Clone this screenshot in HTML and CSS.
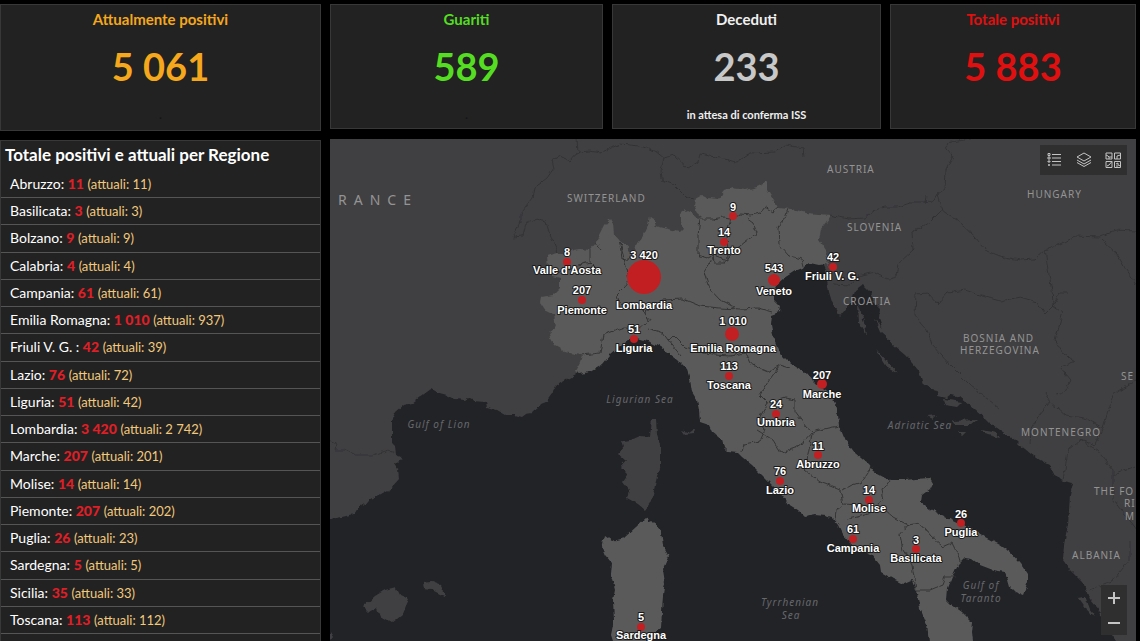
FILE: index.html
```html
<!DOCTYPE html>
<html lang="it">
<head>
<meta charset="utf-8">
<meta name="viewport" content="width=device-width, initial-scale=1">
<title>Situazione per Regione</title>
<link rel="stylesheet" href="styles.css">
</head>
<body>
<main class="dashboard">
  <section class="card card-active card-tall">
    <h2 class="card-title">Attualmente positivi</h2>
    <p class="card-value">5 061</p>
    <p class="card-note card-note-dim">.</p>
  </section>
  <section class="card card-healed">
    <h2 class="card-title">Guariti</h2>
    <p class="card-value">589</p>
    <p class="card-note card-note-dim">.</p>
  </section>
  <section class="card card-deaths">
    <h2 class="card-title">Deceduti</h2>
    <p class="card-value">233</p>
    <p class="card-note">in attesa di conferma ISS</p>
  </section>
  <section class="card card-total">
    <h2 class="card-title">Totale positivi</h2>
    <p class="card-value">5 883</p>
  </section>

  <section class="regions">
    <h2 class="regions-title">Totale positivi e attuali per Regione</h2>
    <ul class="region-list">
      <li>Abruzzo: <b>11</b> <span>(attuali: 11)</span></li>
      <li>Basilicata: <b>3</b> <span>(attuali: 3)</span></li>
      <li>Bolzano: <b>9</b> <span>(attuali: 9)</span></li>
      <li>Calabria: <b>4</b> <span>(attuali: 4)</span></li>
      <li>Campania: <b>61</b> <span>(attuali: 61)</span></li>
      <li>Emilia Romagna: <b>1 010</b> <span>(attuali: 937)</span></li>
      <li>Friuli V. G. : <b>42</b> <span>(attuali: 39)</span></li>
      <li>Lazio: <b>76</b> <span>(attuali: 72)</span></li>
      <li>Liguria: <b>51</b> <span>(attuali: 42)</span></li>
      <li>Lombardia: <b>3 420</b> <span>(attuali: 2 742)</span></li>
      <li>Marche: <b>207</b> <span>(attuali: 201)</span></li>
      <li>Molise: <b>14</b> <span>(attuali: 14)</span></li>
      <li>Piemonte: <b>207</b> <span>(attuali: 202)</span></li>
      <li>Puglia: <b>26</b> <span>(attuali: 23)</span></li>
      <li>Sardegna: <b>5</b> <span>(attuali: 5)</span></li>
      <li>Sicilia: <b>35</b> <span>(attuali: 33)</span></li>
      <li>Toscana: <b>113</b> <span>(attuali: 112)</span></li>
    </ul>
  </section>

  <section class="map">
    <svg class="map-canvas" viewBox="330 139 806 502" preserveAspectRatio="xMidYMid slice" role="img" aria-label="Mappa dei casi per regione">
      <defs>
        <filter id="rough" filterUnits="userSpaceOnUse" x="320" y="130" width="830" height="520">
          <feTurbulence type="fractalNoise" baseFrequency="0.16" numOctaves="2" seed="4"/>
          <feDisplacementMap in="SourceGraphic" scale="5" xChannelSelector="R" yChannelSelector="G"/>
        </filter>
      </defs>
      <g filter="url(#rough)">
        <path class="land" d="M320 130H1150V650H1122L1112 635 1105 625 1100 612 1090 600 1083 583 1070 570 1063 560 1064 545 1068 525 1069 510 1070 495 1073 483 1060 480 1055 475 1050 465 1040 460 1030 453 1020 445 1015 440 1003 432 990 423 985 418 975 409 960 397 952 395 945 393 932 390 923 384 919 371 905 355 893 345 884 332 879 318 880 308 874 302 870 293 862 285 855 290 852 300 845 310 840 316 836 310 832 302 829 292 827 280 826 270 822 262 800 230 700 300 640 330 600 350 576 374 560 383 556 386 552 394 546 402 541 404 539 407 532 413 526 414 522 417 515 415 506 415 497 410 487 407 486 402 474 401 468 398 465 400 455 399 447 395 436 392 431 389 420 397 412 403 404 405 396 412 392 420 392 443 395 446 396 455 401 457 402 460 395 463 398 468 399 479 390 489 372 499 360 506 354 514 342 517 320 521Z"/>
        <path class="land" d="M652 419L656 419 657 435 660 445 660 465 655 485 653 495 650 503 645 510 638 504 627 498 629 490 623 482 628 475 620 467 626 460 618 453 624 446 622 441 631 440 640 436 650 437Z"/>
        <path class="land" d="M363 607L375 596 385 590 396 587 400 595 409 599 402 615 392 623 380 616 377 608 369 613ZM423 582L432 581 440 584 444 592 444 596 432 590 424 589ZM682 431L688 433 695 428 694 434 685 435ZM330 632L333 637 330 641Z"/>
        <path class="land" d="M940 390L952 394 947 398 938 396ZM943 399L962 402 957 407 945 405ZM927 416L937 415 933 419ZM952 421L977 420 971 425 955 425ZM981 430L997 433 1000 438 984 434ZM958 432L966 432 962 436ZM875 320L888 333 901 346 893 344 880 332ZM876 349L887 361 899 374 887 367ZM858 304L865 325 867 335 859 323ZM1077 597L1085 596 1090 609 1096 617 1088 612 1081 602Z"/>
        <path class="italy" d="M547 255L558 252 566 255 573 250 580 249 590 250 596 243 600 235 605 225 610 219 613 224 614 234 620 241 625 245 634 256 637 243 644 235 648 226 650 216 653 218 656 226 664 228 672 230 680 232 684 228 681 222 681 213 685 210 691 213 698 219 703 217 697 212 694 206 695 199 702 195 708 198 718 199 724 191 732 188 745 190 757 187 767 182 767 189 774 200 778 208 792 209 806 213 820 214 830 215 829 218 821 229 819 240 826 250 827 260 830 268 826 264 819 265 810 263 805 267 795 271 784 278 776 285 774 292 774 300 781 307 780 312 772 315 771 325 774 340 779 352 787 360 795 366 805 372 815 383 826 390 832 395 835 405 838 415 839 425 845 440 855 453 868 464 874 472 885 478 890 480 905 480 915 479 930 478 933 483 930 489 922 495 921 502 930 509 945 517 960 524 970 527 985 537 1000 545 1010 552 1020 563 1028 575 1028 582 1023 595 1015 592 1010 587 1008 580 1005 572 993 570 980 565 972 559 965 558 958 565 952 578 948 588 947 600 952 605 962 612 972 622 971 632 973 650H930L927 625 920 608 916 590 912 580 903 584 893 579 881 572 880 565 872 555 860 549 850 543 843 535 838 525 832 518 825 516 815 515 805 517 798 510 788 504 780 493 772 485 762 475 752 465 742 457 738 453 728 452 724 448 722 440 712 432 709 425 700 422 699 410 697 400 692 392 690 378 687 369 678 360 670 354 660 347 650 342 640 339 633 337 622 345 610 355 602 365 590 372 580 374 575 371 580 362 582 355 575 354 565 352 555 346 550 338 549 332 556 327 554 315 546 311 540 302 541 297 553 295 560 288 560 278 552 276 548 268Z"/>
        <path class="italy" d="M646 518L656 524 661 532 663 545 669 556 663 570 665 583 663 595 661 628 655 633 648 632 641 650 616 650 611 635 614 620 613 600 615 590 611 575 612 563 605 555 602 548 605 536 612 541 624 538 636 527Z"/>
        <g class="borders">
          <path d="M513 237L523 236 526 224 537 219 546 222 550 235 558 252M513 237L520 222 520 214 532 198 534 188 547 178 554 168 552 160 560 156 570 161 578 152 590 151 600 153 M578 152L577 139M600 153L620 144 640 146 655 151 664 158 661 170 662 180 674 185 685 196 694 199M664 158L674 155 688 168 698 162 700 154 720 158 737 162 750 153 775 152 785 145 803 148 804 156"/>
          <path d="M830 215L848 219 865 218 875 210 885 207 898 207 910 203 924 203 933 201 937 194 945 188 946 170 953 156 947 149 946 143 970 139M926 195L925 204M937 194L942 210 960 222 975 238 985 250 1000 256 1020 260 1035 259 1045 250 1060 244 1075 236 1100 237 1115 230 1136 231M942 210L930 222 912 232 913 250 898 264 896 277 888 279 875 272 858 276 850 285 833 284M1045 250L1048 270 1052 290 1053 305 1060 293 1068 293M1053 305L1063 312 1055 340 1062 352 1075 361 1060 367 1071 380 1065 392 1056 395M1053 305L1045 313 1037 302 1020 297 1000 301 982 296 964 290 948 293 938 304 928 293 916 294 915 315 927 330 932 345 950 365 970 385 1000 409M1102 240L1117 254 1125 268 1136 285"/>
          <path d="M1045 393L1050 402 1040 415 1031 430 1030 444M1050 402L1065 415 1085 418 1103 428 1095 445 1080 440 1068 450 1065 470 1063 480M1103 428L1113 395 1136 380M1080 440L1097 450 1113 470 1113 500 1125 515 1136 530M1113 475L1136 466M1130 540L1130 560 1113 580 1090 590M330 440L337 444 335 450 345 450 355 455 372 455 388 450 395 453"/>
        </g>
        <g class="regions-lines">
          <path d="M550 270L562 274 578 265 590 262 590 250M590 262L601 273M596 243L601 250M634 256L622 260 620 243 627 270 629 281 625 287 617 295 620 304 632 307 645 312 650 321M582 355L600 353 603 335 625 327 640 328 648 322 646 312 662 300 683 299 700 306 720 308 740 309 758 308 772 312"/>
          <path d="M700 219L713 219 724 217 730 218 740 214 752 215 760 213 765 207 773 212 778 208M700 219L698 235 698 255 707 258 713 255 728 260 727 232 731 218M728 258L735 250 745 242 757 233 753 223 746 218M713 255L714 263 724 263 728 258M713 258L704 272 709 288 720 300 734 307M788 209L784 220 778 227 779 245 789 256 802 259 804 267"/>
          <path d="M648 328L663 333 668 340 673 335 685 347 700 351 715 355 730 356 745 353 750 363 763 370 768 372 780 365 790 368M668 340L681 356M780 365L768 382 760 395 768 403 758 420 765 430 760 441 744 444 742 452M768 403L785 398 795 400 795 412 806 427 812 432 828 428 839 426M757 430L773 440 781 453 795 448 805 441 812 433M812 434L808 455 805 470 820 482 840 490 843 504 836 510 835 520M843 490L852 485 862 482 868 473 873 466M843 504L860 505 872 510 884 500 882 490 889 480M882 507L893 517 908 525 900 535 903 550 912 565 916 590M908 525L920 523 930 535 943 547 952 543 958 555 960 562M916 590L930 590 942 585 945 577 956 577M846 520L872 513"/>
        </g>
      </g>

      <g class="country">
        <text class="country-large" x="338" y="205">RANCE</text>
        <text x="567" y="202">SWITZERLAND</text>
        <text x="827" y="173">AUSTRIA</text>
        <text x="1027" y="198">HUNGARY</text>
        <text x="847" y="231">SLOVENIA</text>
        <text x="843" y="305">CROATIA</text>
        <text x="963" y="342">BOSNIA AND</text>
        <text x="960" y="354">HERZEGOVINA</text>
        <text x="1121" y="380">SE</text>
        <text x="1021" y="436">MONTENEGRO</text>
        <text x="1094" y="495">THE FO</text>
        <text x="1124" y="507">RI</text>
        <text x="1125" y="520">M</text>
        <text x="1072" y="559">ALBANIA</text>
      </g>
      <g class="water">
        <text x="439" y="428">Gulf of Lion</text>
        <text x="640" y="403">Ligurian Sea</text>
        <text x="920" y="429">Adriatic Sea</text>
        <text x="790" y="606">Tyrrhenian</text>
        <text x="791" y="619">Sea</text>
        <text x="981" y="589">Gulf of</text>
        <text x="981" y="602">Taranto</text>
      </g>

      <g class="cases">
        <circle cx="733" cy="216" r="4"/><circle cx="724" cy="242" r="4"/><circle cx="567" cy="262" r="4"/><circle cx="582" cy="300" r="4"/>
        <circle cx="644" cy="277" r="17"/><circle cx="774" cy="280" r="6"/><circle cx="833" cy="267" r="4"/><circle cx="634" cy="339" r="4"/>
        <circle cx="732" cy="334" r="7"/><circle cx="729" cy="376" r="4"/><circle cx="822" cy="384" r="5"/><circle cx="776" cy="414" r="4"/>
        <circle cx="818" cy="455" r="4"/><circle cx="780" cy="481" r="4"/><circle cx="869" cy="500" r="4"/><circle cx="853" cy="539" r="4"/>
        <circle cx="916" cy="549" r="4"/><circle cx="961" cy="523" r="4"/><circle cx="641" cy="627" r="4"/>
      </g>
      <g class="labels">
        <text x="733" y="211">9</text>
        <text x="724" y="236">14</text><text x="724" y="254">Trento</text>
        <text x="567" y="256">8</text><text x="567" y="274">Valle d'Aosta</text>
        <text x="582" y="294">207</text><text x="582" y="314">Piemonte</text>
        <text x="644" y="259">3 420</text><text x="644" y="309">Lombardia</text>
        <text x="774" y="272">543</text><text x="774" y="295">Veneto</text>
        <text x="833" y="261">42</text><text x="832" y="280">Friuli V. G.</text>
        <text x="634" y="333">51</text><text x="634" y="352">Liguria</text>
        <text x="733" y="325">1 010</text><text x="733" y="352">Emilia Romagna</text>
        <text x="729" y="370">113</text><text x="729" y="389">Toscana</text>
        <text x="822" y="379">207</text><text x="822" y="398">Marche</text>
        <text x="776" y="408">24</text><text x="776" y="426">Umbria</text>
        <text x="818" y="450">11</text><text x="818" y="468">Abruzzo</text>
        <text x="780" y="475">76</text><text x="780" y="494">Lazio</text>
        <text x="869" y="494">14</text><text x="869" y="512">Molise</text>
        <text x="853" y="533">61</text><text x="853" y="552">Campania</text>
        <text x="916" y="544">3</text><text x="916" y="562">Basilicata</text>
        <text x="961" y="518">26</text><text x="961" y="536">Puglia</text>
        <text x="641" y="621">5</text><text x="641" y="639">Sardegna</text>
      </g>
    </svg>

    <div class="toolbar">
      <button type="button" aria-label="Legenda">
        <svg viewBox="0 0 16 16"><path d="M5 2.5h9M5 6h9M5 9.5h9M5 13h9"/><path d="M1 1.5h2v2H1zM1 5h2v2H1zM1 9h2v1H1zM1.500 12.500h1v1h-1z"/></svg>
      </button>
      <button type="button" aria-label="Livelli">
        <svg viewBox="0 0 16 16"><path d="M8 1L15 5 8 9 1 5ZM1 8L8 12 15 8M1 10.500L8 14.500 15 10.500"/></svg>
      </button>
      <button type="button" aria-label="Mappe di base">
        <svg viewBox="0 0 16 16"><path d="M1 1h6v6H1zM9.500 1h6v6h-6zM1 9.500h6v6H1zM9.500 9.500h6v6h-6z"/><path d="M1 3l2 1 1 1h3M4 5v2M12 7V4l3.500-1M2 14l2-1 3-3.500M11 12l2-1v2l2.500 1M12 13v2.500"/></svg>
      </button>
    </div>
    <div class="zoom">
      <button type="button" aria-label="Ingrandisci"><svg viewBox="0 0 14 14"><path d="M1 7h12M7 1v12"/></svg></button>
      <button type="button" aria-label="Riduci"><svg viewBox="0 0 14 14"><path d="M1 7h12"/></svg></button>
    </div>
  </section>
</main>
</body>
</html>
```

FILE: styles.css
```css
* {
  box-sizing: border-box;
}

body {
  margin: 0;
  background: #000;
  color: #fff;
  font-family: Lato, "Open Sans", sans-serif;
}

h2,
p,
ul {
  margin: 0;
  padding: 0;
}

.dashboard {
  display: grid;
  grid-template-columns: 321fr 273fr 269fr 246fr;
  grid-template-rows: auto minmax(0, 1fr);
  column-gap: 9px;
  row-gap: 8px;
  height: 100vh;
  padding: 4px 4px 0 0;
}

.card {
  display: flex;
  flex-direction: column;
  align-items: center;
  min-height: 125px;
  margin-bottom: 2px;
  padding-top: 5px;
  background: #222;
  border: 1px solid #383838;
}

.card-tall {
  margin-bottom: 0;
  min-height: 127px;
}

.card-title {
  font-size: 15px;
  line-height: 18px;
  font-weight: 700;
}

.card-value {
  margin-top: 16px;
  font-size: 38px;
  line-height: 44px;
  font-weight: 700;
}

.card-note {
  margin-top: 20px;
  font-size: 11px;
  line-height: 14px;
  font-weight: 700;
}

.card-note-dim {
  color: #141414;
}

.card-active {
  color: #f5a81c;
}

.card-healed {
  color: #55dd22;
}

.card-deaths {
  color: #f0f0f0;
}

.card-deaths .card-value {
  color: #c8c8c8;
}

.card-total {
  color: #e01010;
}

.regions {
  display: flex;
  flex-direction: column;
  min-height: 0;
  margin-top: 1px;
  padding-bottom: 7px;
  overflow: hidden;
  background: #222;
  border: 1px solid #383838;
  border-bottom: 0;
}

.regions-title {
  padding: 4px 4px 6px;
  font-size: 17px;
  line-height: 20px;
}

.region-list {
  display: grid;
  flex: 1;
  grid-auto-rows: minmax(27px, 1fr);
  list-style: none;
  font-size: 14px;
  line-height: 20px;
}

.region-list li {
  padding: 3px 9px;
  border-bottom: 1px solid #555;
  white-space: nowrap;
}

.region-list b {
  color: #e01e26;
  font-weight: 900;
}

.region-list span {
  color: #f2c97c;
  font-size: 13px;
}

.map {
  position: relative;
  grid-column: 2 / -1;
  min-height: 0;
  overflow: hidden;
  background: #222327;
}

.map-canvas {
  display: block;
  width: 100%;
  height: 100%;
}

.land {
  fill: #414042;
}

.italy {
  fill: #5a5a5a;
}

.borders {
  fill: none;
  stroke: #333336;
  stroke-width: 1;
}

.regions-lines {
  fill: none;
  stroke: #343434;
  stroke-width: 1;
}

.country {
  fill: #949494;
  font: 10px "Noto Sans", sans-serif;
  letter-spacing: 1px;
}

.country-large {
  font-size: 14px;
  letter-spacing: 7px;
}

.water {
  fill: #66686c;
  font: italic 10px "Noto Sans", sans-serif;
  letter-spacing: 1px;
  text-anchor: middle;
}

.cases {
  fill: #c21f22;
}

.labels {
  fill: #fff;
  stroke: #1a1a1a;
  stroke-width: 2;
  stroke-linejoin: round;
  paint-order: stroke;
  font: bold 11px "Liberation Sans", sans-serif;
  text-anchor: middle;
}

.toolbar,
.zoom {
  position: absolute;
  right: 9px;
  display: flex;
  background: #2f2f30;
}

.toolbar {
  top: 6px;
}

.zoom {
  bottom: 6px;
  flex-direction: column;
}

.toolbar button,
.zoom button {
  display: grid;
  place-items: center;
  padding: 0;
  background: none;
  border: 0;
  cursor: pointer;
}

.toolbar button {
  width: 29px;
  height: 30px;
}

.zoom button {
  width: 26px;
  height: 25px;
}

.toolbar svg,
.zoom svg {
  fill: none;
  stroke: #c4c4c4;
}

.toolbar svg {
  width: 16px;
  height: 16px;
}

.zoom svg {
  width: 14px;
  height: 14px;
  stroke-width: 2;
}
```
